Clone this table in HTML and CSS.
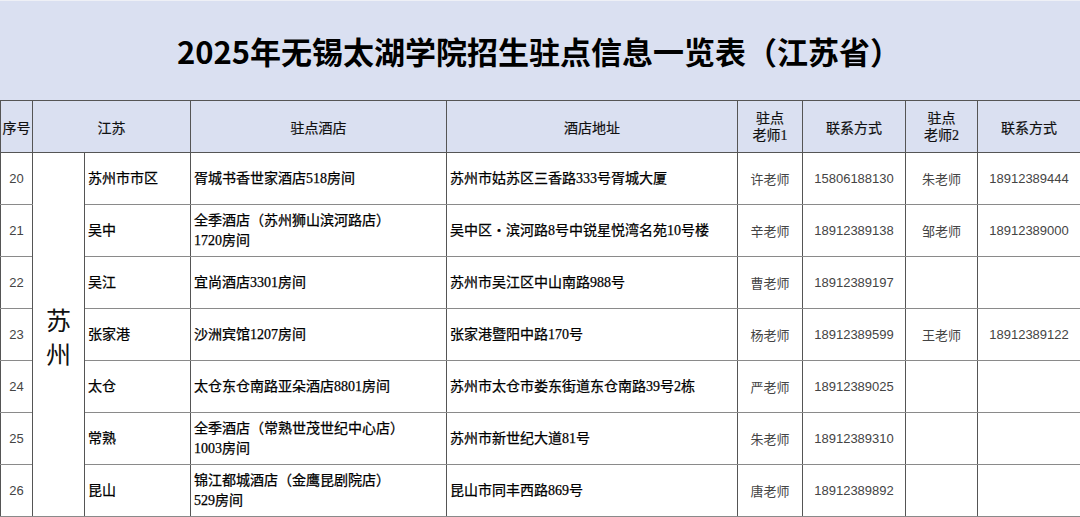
FILE: index.html
```html
<!DOCTYPE html>
<html lang="zh-CN">
<head>
<meta charset="utf-8">
<title>2025年无锡太湖学院招生驻点信息一览表（江苏省）</title>
<link rel="stylesheet" href="styles.css">
</head>
<body>
<div class="page">
  <div class="title">2025年无锡太湖学院招生驻点信息一览表（江苏省）</div>
  <table class="grid">
    <colgroup>
      <col class="c-no"><col class="c-prov"><col class="c-area"><col class="c-hotel"><col class="c-addr">
      <col class="c-t"><col class="c-ph"><col class="c-t2"><col class="c-ph2">
    </colgroup>
    <thead>
      <tr>
        <th>序号</th>
        <th colspan="2">江苏</th>
        <th>驻点酒店</th>
        <th>酒店地址</th>
        <th class="two">驻点<br>老师1</th>
        <th>联系方式</th>
        <th class="two">驻点<br>老师2</th>
        <th>联系方式</th>
      </tr>
    </thead>
    <tbody>
      <tr>
        <td class="no">20</td>
        <td class="prov" rowspan="7"><span>苏</span><span>州</span></td>
        <td class="txt">苏州市市区</td>
        <td class="txt">胥城书香世家酒店518房间</td>
        <td class="txt">苏州市姑苏区三香路333号胥城大厦</td>
        <td class="name">许老师</td>
        <td class="ph">15806188130</td>
        <td class="name">朱老师</td>
        <td class="ph">18912389444</td>
      </tr>
      <tr>
        <td class="no">21</td>
        <td class="txt">吴中</td>
        <td class="txt">全季酒店（苏州狮山滨河路店）<br>1720房间</td>
        <td class="txt">吴中区・滨河路8号中锐星悦湾名苑10号楼</td>
        <td class="name">辛老师</td>
        <td class="ph">18912389138</td>
        <td class="name">邹老师</td>
        <td class="ph">18912389000</td>
      </tr>
      <tr>
        <td class="no">22</td>
        <td class="txt">吴江</td>
        <td class="txt">宜尚酒店3301房间</td>
        <td class="txt">苏州市吴江区中山南路988号</td>
        <td class="name">曹老师</td>
        <td class="ph">18912389197</td>
        <td class="name"></td>
        <td class="ph"></td>
      </tr>
      <tr>
        <td class="no">23</td>
        <td class="txt">张家港</td>
        <td class="txt">沙洲宾馆1207房间</td>
        <td class="txt">张家港暨阳中路170号</td>
        <td class="name">杨老师</td>
        <td class="ph">18912389599</td>
        <td class="name">王老师</td>
        <td class="ph">18912389122</td>
      </tr>
      <tr>
        <td class="no">24</td>
        <td class="txt">太仓</td>
        <td class="txt">太仓东仓南路亚朵酒店8801房间</td>
        <td class="txt">苏州市太仓市娄东街道东仓南路39号2栋</td>
        <td class="name">严老师</td>
        <td class="ph">18912389025</td>
        <td class="name"></td>
        <td class="ph"></td>
      </tr>
      <tr>
        <td class="no">25</td>
        <td class="txt">常熟</td>
        <td class="txt">全季酒店（常熟世茂世纪中心店）<br>1003房间</td>
        <td class="txt">苏州市新世纪大道81号</td>
        <td class="name">朱老师</td>
        <td class="ph">18912389310</td>
        <td class="name"></td>
        <td class="ph"></td>
      </tr>
      <tr>
        <td class="no">26</td>
        <td class="txt">昆山</td>
        <td class="txt">锦江都城酒店（金鹰昆剧院店）<br>529房间</td>
        <td class="txt">昆山市同丰西路869号</td>
        <td class="name">唐老师</td>
        <td class="ph">18912389892</td>
        <td class="name"></td>
        <td class="ph"></td>
      </tr>
    </tbody>
  </table>
</div>
</body>
</html>
```

FILE: styles.css
```css
* { box-sizing: border-box; }
html, body { margin: 0; padding: 0; background: #ffffff; }
body {
  width: 1080px;
  height: 517px;
  overflow: hidden;
  font-family: "Liberation Serif", "Noto Sans CJK SC", serif;
  color: #111;
}
.page { width: 1080px; }
.title {
  height: 100px;
  background: #dae0f1;
  display: flex;
  align-items: center;
  justify-content: center;
  font-family: "Noto Sans CJK SC", "Liberation Sans", sans-serif;
  font-weight: 700;
  font-size: 31px;
  letter-spacing: 0;
  color: #000;
  padding-right: 2px;
  border-top: 1px solid #eef0f6;
}
.grid {
  width: 1080px;
  border-collapse: collapse;
  table-layout: fixed;
}
.c-no { width: 32px; }
.c-prov { width: 52px; }
.c-area { width: 106px; }
.c-hotel { width: 256px; }
.c-addr { width: 291px; }
.c-t { width: 65px; }
.c-ph { width: 103px; }
.c-t2 { width: 72px; }
.c-ph2 { width: 103px; }

.grid th, .grid td {
  border: 1px solid #555;
  padding: 0;
  overflow: hidden;
  white-space: nowrap;
}
.grid tbody td { border-top-color: #8a8a8a; border-bottom-color: #8a8a8a; }
.grid th {
  height: 52px;
  background: #dae0f1;
  font-weight: 400;
  font-size: 14px;
  text-align: center;
  color: #111;
  font-family: "Liberation Serif", "Noto Sans CJK SC", serif;
  -webkit-text-stroke: 0.2px #111;
}
.grid th.two { line-height: 17px; }
.grid td { height: 52px; font-size: 14px; vertical-align: middle; }
.grid td.no {
  text-align: center;
  font-family: "Liberation Sans", "Noto Sans CJK SC", sans-serif;
  font-size: 13px;
  color: #444;
}
.grid td.prov {
  text-align: center;
  font-family: "Noto Sans CJK SC", serif;
  font-size: 25px;
  color: #111;
  line-height: 34px;
  vertical-align: middle;
  padding-top: 2px;
}
.grid td.prov span { display: block; }
.grid td.txt {
  text-align: left;
  padding-left: 3px;
  line-height: 20px;
  color: #000;
  -webkit-text-stroke: 0.25px #000;
}
.grid td.name {
  text-align: center;
  font-family: "Noto Sans CJK SC", sans-serif;
  font-size: 13px;
  color: #444;
}
.grid td.ph {
  text-align: center;
  font-family: "Liberation Sans", sans-serif;
  font-size: 13px;
  color: #444;
}
```
